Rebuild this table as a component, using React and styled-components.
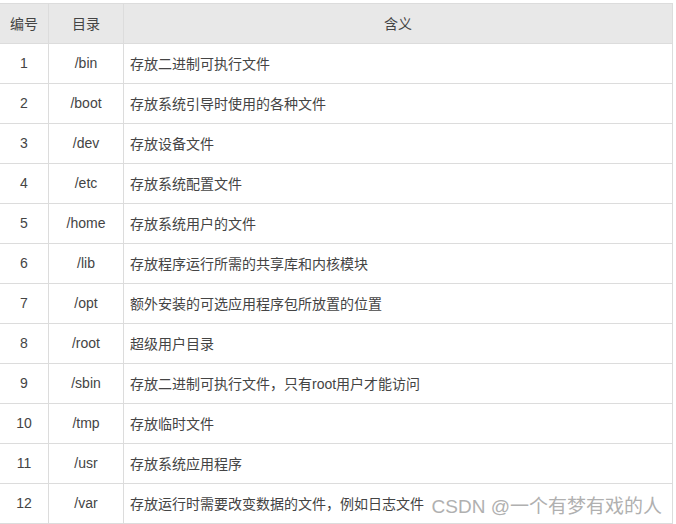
import styled, { createGlobalStyle } from "styled-components";

const Global = createGlobalStyle`
  html, body {
    margin: 0;
    padding: 0;
    background: #fff;
  }
  body {
    font-family: "Liberation Sans", Arial, "Noto Sans CJK SC", sans-serif;
  }
`;

const Page = styled.div`
  width: 676px;
  height: 524px;
  overflow: hidden;
  padding-top: 3px;
  box-sizing: border-box;
  position: relative;
`;

const Table = styled.table`
  border-collapse: collapse;
  margin-left: -1px;
  width: 674px;
  table-layout: fixed;
  font-size: 14px;
  color: #444;
`;

const Head = styled.th`
  background: #e8e8e8;
  border: 1px solid #dcdcdc;
  height: 40px;
  box-sizing: border-box;
  padding: 0 0 2px;
  font-weight: normal;
  text-align: center;
  color: #444;
`;

const Cell = styled.td`
  border: 1px solid #dcdcdc;
  height: 40px;
  box-sizing: border-box;
  padding: 0 ${(p) => (p.$left ? "6px" : "0")} 2px;
  text-align: ${(p) => (p.$left ? "left" : "center")};
  white-space: nowrap;
`;

const Mark = styled.span`
  position: absolute;
  right: 14px;
  bottom: 6px;
  font-size: 19px;
  color: #b0b0b0;
  font-family: "Liberation Sans", Arial, "Noto Sans CJK SC", sans-serif;
`;

const rows = [
  ["1", "/bin", "存放二进制可执行文件"],
  ["2", "/boot", "存放系统引导时使用的各种文件"],
  ["3", "/dev", "存放设备文件"],
  ["4", "/etc", "存放系统配置文件"],
  ["5", "/home", "存放系统用户的文件"],
  ["6", "/lib", "存放程序运行所需的共享库和内核模块"],
  ["7", "/opt", "额外安装的可选应用程序包所放置的位置"],
  ["8", "/root", "超级用户目录"],
  ["9", "/sbin", "存放二进制可执行文件，只有root用户才能访问"],
  ["10", "/tmp", "存放临时文件"],
  ["11", "/usr", "存放系统应用程序"],
  ["12", "/var", "存放运行时需要改变数据的文件，例如日志文件"],
];

export default function App() {
  return (
    <Page>
      <Global />
      <Table>
        <colgroup>
          <col style={{ width: 49 }} />
          <col style={{ width: 75 }} />
          <col />
        </colgroup>
        <thead>
          <tr>
            <Head>编号</Head>
            <Head>目录</Head>
            <Head>含义</Head>
          </tr>
        </thead>
        <tbody>
          {rows.map(([n, dir, desc]) => (
            <tr key={n}>
              <Cell>{n}</Cell>
              <Cell>{dir}</Cell>
              <Cell $left>{desc}</Cell>
            </tr>
          ))}
        </tbody>
      </Table>
      <Mark>CSDN @一个有梦有戏的人</Mark>
    </Page>
  );
}
